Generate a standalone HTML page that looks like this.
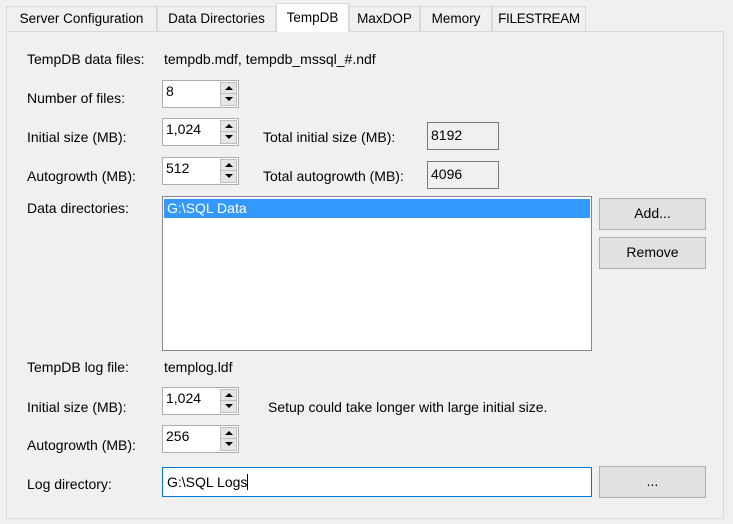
<!DOCTYPE html>
<html><head><style>
body{margin:0;width:733px;height:524px;background:#f0f0f0;font-family:"Liberation Sans",sans-serif;font-size:14px;color:#000;position:relative;overflow:hidden}
.a{position:absolute}
.tab{position:absolute;top:6px;height:25px;border:1px solid #d9d9d9;border-bottom:none;background:#f0f0f0;box-sizing:border-box;text-align:center;line-height:24px;white-space:nowrap;font-size:13.5px}
.panel{position:absolute;left:6px;top:31px;width:718px;height:488px;border:1px solid #d9d9d9;box-sizing:border-box;background:#f0f0f0}
.lbl{position:absolute;line-height:16px;white-space:nowrap}
.spin{position:absolute;width:77px;height:28px;border:1px solid #adadad;box-sizing:border-box;background:#fff}
.spin span{position:absolute;left:3px;top:2px}
.sb{position:absolute;left:57px;top:1px;width:17px;height:24px;background:#e5e5e5;border:1px solid #bfbfbf;box-sizing:border-box}
.sb i{position:absolute;left:4px;width:0;height:0;border-left:4px solid transparent;border-right:4px solid transparent}
.sb .u{top:3px;border-bottom:4px solid #000}
.sb .d{top:14px;border-top:4px solid #000}
.sb b{position:absolute;left:0;right:0;top:10px;border-top:1px solid #bfbfbf}
.ro{position:absolute;width:72px;height:28px;border:1px solid #7a7a7a;box-sizing:border-box;background:#f0f0f0}
.ro span{position:absolute;left:3px;top:4px}
.btn{position:absolute;left:599px;width:107px;height:32px;border:1px solid #adadad;box-sizing:border-box;background:#e1e1e1;text-align:center;line-height:29px}
</style></head><body>
<div class="panel"></div>
<div class="tab" style="left:6px;width:151px">Server Configuration</div>
<div class="tab" style="left:157px;width:119px">Data Directories</div>
<div class="tab" style="left:276px;width:73px;top:3px;height:29px;background:#fff;z-index:2;line-height:27px">TempDB</div>
<div class="tab" style="left:349px;width:71px">MaxDOP</div>
<div class="tab" style="left:420px;width:72px">Memory</div>
<div class="tab" style="left:492px;width:94px;letter-spacing:-0.3px">FILESTREAM</div>

<div class="lbl" style="left:27px;top:51px">TempDB data files:</div>
<div class="lbl" style="left:164px;top:51px">tempdb.mdf, tempdb_mssql_#.ndf</div>

<div class="lbl" style="left:27px;top:90px">Number of files:</div>
<div class="spin" style="left:162px;top:80px"><span>8</span><div class="sb"><i class="u"></i><b></b><i class="d"></i></div></div>

<div class="lbl" style="left:27px;top:129px">Initial size (MB):</div>
<div class="spin" style="left:162px;top:118px"><span>1,024</span><div class="sb"><i class="u"></i><b></b><i class="d"></i></div></div>
<div class="lbl" style="left:263px;top:129px">Total initial size (MB):</div>
<div class="ro" style="left:427px;top:122px"><span>8192</span></div>

<div class="lbl" style="left:27px;top:168px">Autogrowth (MB):</div>
<div class="spin" style="left:162px;top:157px"><span>512</span><div class="sb"><i class="u"></i><b></b><i class="d"></i></div></div>
<div class="lbl" style="left:263px;top:168px">Total autogrowth (MB):</div>
<div class="ro" style="left:427px;top:161px"><span>4096</span></div>

<div class="lbl" style="left:27px;top:200px">Data directories:</div>
<div class="a" style="left:162px;top:196px;width:430px;height:155px;border:1px solid #828790;box-sizing:border-box;background:#fff">
<div class="a" style="left:1px;top:2px;width:426px;height:19px;background:#3399ff;color:#fff;line-height:19px;padding-left:3px;box-sizing:border-box">G:\SQL Data</div></div>
<div class="btn" style="top:198px">Add...</div>
<div class="btn" style="top:237px">Remove</div>

<div class="lbl" style="left:27px;top:359px">TempDB log file:</div>
<div class="lbl" style="left:164px;top:359px">templog.ldf</div>

<div class="lbl" style="left:27px;top:399px">Initial size (MB):</div>
<div class="spin" style="left:162px;top:387px"><span>1,024</span><div class="sb"><i class="u"></i><b></b><i class="d"></i></div></div>
<div class="lbl" style="left:268px;top:399px">Setup could take longer with large initial size.</div>

<div class="lbl" style="left:27px;top:437px">Autogrowth (MB):</div>
<div class="spin" style="left:162px;top:425px"><span>256</span><div class="sb"><i class="u"></i><b></b><i class="d"></i></div></div>

<div class="lbl" style="left:27px;top:476px">Log directory:</div>
<div class="a" style="left:162px;top:467px;width:430px;height:30px;border:1px solid #0078d7;box-sizing:border-box;background:#fff"><span class="a" style="left:4px;top:6px">G:\SQL Logs<span style="border-right:1px solid #000"></span></span></div>
<div class="btn" style="top:466px">...</div>
</body></html>
